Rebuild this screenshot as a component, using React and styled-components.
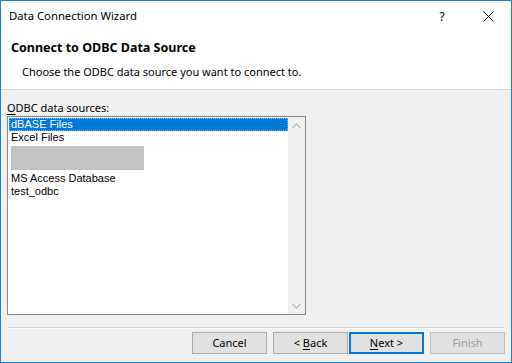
import React from "react";
import styled, { createGlobalStyle } from "styled-components";

const Global = createGlobalStyle`
  html, body { margin: 0; padding: 0; background: #f0f0f0; }
  * { box-sizing: border-box; }
  body { font-family: "Noto Sans", "Segoe UI", sans-serif; font-size: 11px; color: #000; }
`;

const Window = styled.div`
  width: 512px;
  height: 363px;
  border: 1px solid #1883d7;
  background: #f0f0f0;
  display: flex;
  flex-direction: column;
  overflow: hidden;
`;

const TitleBar = styled.div`
  height: 30px;
  background: #fff;
  display: flex;
  align-items: center;
  padding-left: 8px;
`;

const TitleText = styled.div`
  flex: 1;
  font-size: 11.3px;
  line-height: 30px;
`;

const CaptionButton = styled.div`
  width: 46px;
  height: 30px;
  display: flex;
  align-items: center;
  justify-content: center;
  font-size: 12px;
`;

const Header = styled.div`
  background: #fff;
  height: 59px;
  border-bottom: 1px solid #dadada;
  padding: 9px 10px 0 10px;
  display: flex;
  flex-direction: column;
  gap: 8px;
`;

const HeaderTitle = styled.div`
  font-weight: bold;
  font-size: 12.5px;
  line-height: 16px;
`;

const HeaderSub = styled.div`
  padding-left: 11px;
  line-height: 16px;
`;

const Body = styled.div`
  flex: 1;
  display: flex;
  flex-direction: column;
  padding: 10px 6px 0 6px;
`;

const Label = styled.div`
  line-height: 15px;
  margin-bottom: 1px;
`;

const U = styled.span`
  text-decoration: underline;
  text-underline-offset: 2px;
`;

const ListBox = styled.div`
  width: 299px;
  height: 199px;
  border: 1px solid #828790;
  background: #fff;
  display: flex;
`;

const Items = styled.div`
  flex: 1;
  padding: 1px 0 0 1px;
  display: flex;
  flex-direction: column;
  font-family: "Liberation Sans", Arial, sans-serif;
  font-size: 11px;
`;

const Item = styled.div`
  height: 13px;
  line-height: 13px;
  padding-left: 2px;
  white-space: nowrap;
  background: ${(p) => (p.$selected ? "#0078d7" : "transparent")};
  color: ${(p) => (p.$selected ? "#fff" : "#000")};
  outline: ${(p) => (p.$selected ? "1px dotted #7fb8ea" : "none")};
  outline-offset: -1px;
`;

const Redacted = styled.div`
  width: 133px;
  height: 24px;
  margin: 2px 0 0 2px;
  background: #c3c3c3;
`;

const Gap = styled.div`
  height: 2px;
`;

const ScrollBar = styled.div`
  width: 17px;
  background: #f0f0f0;
  display: flex;
  flex-direction: column;
  justify-content: space-between;
  align-items: center;
  padding: 6px 0 5px;
`;

const Divider = styled.div`
  margin: 12px 1px 0 1px;
  height: 2px;
  border-top: 1px solid #d5d5d5;
  border-bottom: 1px solid #fbfbfb;
`;

const Buttons = styled.div`
  display: flex;
  justify-content: flex-end;
  padding-top: 3px;
  padding-right: 0px;
`;

const Button = styled.div`
  width: 75px;
  height: 22px;
  margin-left: ${(p) => p.$gap}px;
  display: flex;
  align-items: center;
  justify-content: center;
  background: #e1e1e1;
  border: ${(p) => (p.$default ? "2px solid #0078d7" : p.$disabled ? "1px solid #bfbfbf" : "1px solid #adadad")};
  color: ${(p) => (p.$disabled ? "#a0a0a0" : "#000")};
  line-height: 14px;
`;

const Chevron = ({ up }) => (
  <svg width="9" height="6" viewBox="0 0 9 6">
    <path
      d={up ? "M0.5 5 L4.5 1 L8.5 5" : "M0.5 1 L4.5 5 L8.5 1"}
      fill="none"
      stroke="#bdbdbd"
      strokeWidth="1.3"
    />
  </svg>
);

export default function App() {
  return (
    <>
      <Global />
      <Window>
        <TitleBar>
          <TitleText>Data Connection Wizard</TitleText>
          <CaptionButton>?</CaptionButton>
          <CaptionButton>
            <svg width="11" height="11" viewBox="0 0 11 11">
              <path d="M0.5 0.5 L10.5 10.5 M10.5 0.5 L0.5 10.5" stroke="#000" strokeWidth="1" fill="none" />
            </svg>
          </CaptionButton>
        </TitleBar>
        <Header>
          <HeaderTitle>Connect to ODBC Data Source</HeaderTitle>
          <HeaderSub>Choose the ODBC data source you want to connect to.</HeaderSub>
        </Header>
        <Body>
          <Label>
            <U>O</U>DBC data sources:
          </Label>
          <ListBox>
            <Items>
              <Item $selected>dBASE Files</Item>
              <Item>Excel Files</Item>
              <Redacted />
              <Gap />
              <Item>MS Access Database</Item>
              <Item>test_odbc</Item>
            </Items>
            <ScrollBar>
              <Chevron up />
              <Chevron />
            </ScrollBar>
          </ListBox>
          <Divider />
          <Buttons>
            <Button $gap={0}>Cancel</Button>
            <Button $gap={6}>
              &lt;&nbsp;<U>B</U>ack
            </Button>
            <Button $gap={1} $default>
              <U>N</U>ext &gt;
            </Button>
            <Button $gap={6} $disabled>
              Finish
            </Button>
          </Buttons>
        </Body>
      </Window>
    </>
  );
}
